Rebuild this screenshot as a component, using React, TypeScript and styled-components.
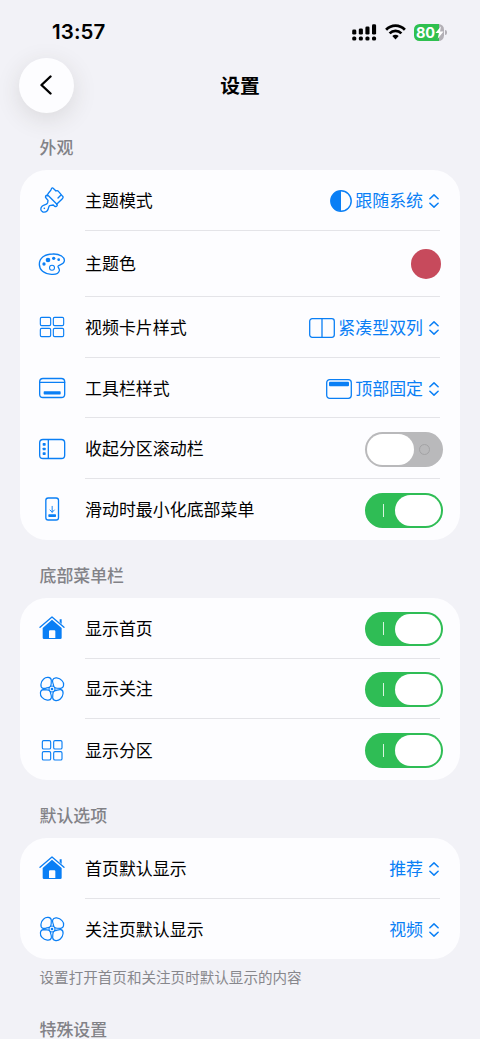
import React from 'react';
import styled, { createGlobalStyle } from 'styled-components';

const BLUE = '#0a7ff5';

const GlobalStyle = createGlobalStyle`
  * { box-sizing: border-box; }
  html, body { margin: 0; padding: 0; height: 100%; overflow: hidden; background: #f2f2f7; }
`;

const Screen = styled.main`
  width: 480px;
  height: 1039px;
  overflow: hidden;
  background: #f2f2f7;
  color: #000;
  font-family: Inter, 'Noto Sans CJK SC', sans-serif;
  display: flex;
  flex-direction: column;
`;

const StatusBar = styled.div`
  height: 58px;
  flex: none;
  padding: 6px 33px 0 52px;
  display: flex;
  align-items: flex-start;
  justify-content: space-between;
`;

const Clock = styled.time`
  font-size: 20.5px;
  line-height: 52px;
  font-weight: 600;
  letter-spacing: 0.1px;
`;

const StatusIcons = styled.div`
  height: 52px;
  display: flex;
  align-items: center;
  gap: 8px;
`;

const Battery = styled.div`
  display: flex;
  align-items: center;
  gap: 1px;
`;

const BatteryBody = styled.div`
  width: 30.5px;
  height: 17px;
  border-radius: 5.5px;
  background: linear-gradient(90deg, #2fc04f 0 25px, #b3b0b6 25px);
  color: #fff;
  display: flex;
  align-items: center;
  padding-left: 2.5px;
  font-size: 14.5px;
  line-height: 17px;
  font-weight: 700;
  letter-spacing: -0.2px;
`;

const BatteryCap = styled.div`
  width: 2px;
  height: 5px;
  border-radius: 0 2px 2px 0;
  background: #b3b0b6;
`;

const NavBar = styled.header`
  height: 55px;
  flex: none;
  display: grid;
  grid-template-columns: 55px 1fr 55px;
  align-items: center;
  padding: 0 19px;
`;

const BackButton = styled.button`
  width: 55px;
  height: 55px;
  border: 0;
  padding: 0 2px 2px 0;
  border-radius: 50%;
  background: #fdfdff;
  box-shadow: 0 6px 24px rgba(60, 55, 40, 0.13);
  display: flex;
  align-items: center;
  justify-content: center;
`;

const Title = styled.h1`
  margin: 0;
  text-align: center;
  font-size: 19.8px;
  line-height: 28px;
  font-weight: 700;
`;

const SectionLabel = styled.h2<{ $height: number }>`
  margin: 0;
  flex: none;
  height: ${(p) => p.$height}px;
  padding: 0 39.5px 9px;
  display: flex;
  align-items: flex-end;
  color: #828287;
  font-size: 16.9px;
  line-height: 26px;
  font-weight: 500;
`;

const Card = styled.section`
  flex: none;
  margin: 0 20px;
  border-radius: 27px;
  background: #fdfdff;
`;

const Row = styled.div<{ $height?: number }>`
  height: ${(p) => p.$height ?? 60.7}px;
  display: flex;
  align-items: center;
  padding: 0 20px 0 18px;
`;

const IconSlot = styled.div`
  width: 28px;
  flex: none;
  margin-right: 19px;
  display: flex;
  justify-content: center;
`;

const RowContent = styled.div`
  flex: 1;
  align-self: stretch;
  padding-top: 2px;
  display: flex;
  align-items: center;
  justify-content: space-between;
  ${Row}:not(:last-child) > & {
    border-bottom: 1px solid #e4e4e8;
  }
`;

const RowLabel = styled.span`
  font-size: 16.95px;
  line-height: 26px;
`;

const Picker = styled.button`
  border: 0;
  padding: 0 1px 0 0;
  background: none;
  display: flex;
  align-items: center;
  color: ${BLUE};
  font: inherit;
  font-size: 16.95px;
  line-height: 26px;
`;

const PickerIcon = styled.span<{ $gap: number }>`
  display: flex;
  margin-right: ${(p) => p.$gap}px;
`;

const PickerArrows = styled.svg`
  margin-left: 6px;
`;

const Swatch = styled.span`
  width: 30px;
  height: 30px;
  margin-right: -1px;
  border-radius: 50%;
  background: #c74a5c;
`;

const Switch = styled.button<{ $on: boolean }>`
  width: 78px;
  height: 34.5px;
  margin-right: -3px;
  border: 0;
  border-radius: 18px;
  padding: 2px;
  background: ${(p) => (p.$on ? '#2fbd55' : '#b9b9bb')};
  display: flex;
  align-items: center;
  flex-direction: ${(p) => (p.$on ? 'row' : 'row-reverse')};
`;

const SwitchMark = styled.span`
  flex: 1;
  display: flex;
  justify-content: center;
`;

const OnMark = styled.span`
  width: 1.4px;
  height: 13px;
  margin-left: 6px;
  background: #d9f5df;
`;

const OffMark = styled.span`
  width: 11px;
  height: 11px;
  margin-right: 6px;
  border: 1px solid #a3a3a5;
  border-radius: 50%;
`;

const Knob = styled.span`
  width: 46.5px;
  height: 30.5px;
  border-radius: 16px;
  background: #fff;
`;

const Footnote = styled.p`
  margin: 0;
  flex: none;
  padding: 7px 39.5px 0;
  color: #87878c;
  font-size: 14.57px;
  line-height: 24px;
`;

function Glyph({ children, width = 4 }: { children: React.ReactNode; width?: number }) {
  return (
    <svg width="28" height="28" viewBox="-42 -42 84 84" fill="none" stroke={BLUE} strokeWidth={width} strokeLinecap="round" strokeLinejoin="round">
      {children}
    </svg>
  );
}

const Brush = () => (
  <Glyph>
    <path d="M-15-12C-12-24-3-25-2-33Q0-39 5-34L12-27Q16-30 20-25L32-11Q35-8 31-4L14 13M27-15L18-6" />
    <path d="M-19-12Q-15-17-10-12L14 12Q18 17 13 19Q9 21 6 17L4 15L-7 17Q-9 18-10 22C-12 33-20 37-27 36C-36 33-35 23-29 18C-24 14-15 14-13 8L-12 1L-18-6Q-21-9-19-12Z" />
    <circle cx="-23" cy="25" r="2.5" fill={BLUE} stroke="none" />
  </Glyph>
);

const Palette = () => (
  <Glyph>
    <path d="M2-30C24-31 39-20 37-9C36 3 17 2 18 8C19 13 23 14 22 20C20 29 10 32-2 31C-24 30-38 18-38 1C-38-18-22-30 2-30Z" />
    <circle cx="0" cy="11" r="7.5" strokeWidth="3.2" />
    <g fill={BLUE} stroke="none">
      <circle cx="-24" cy="0" r="5" />
      <circle cx="-12" cy="-12" r="7" />
      <circle cx="5" cy="-17" r="5" />
      <circle cx="20" cy="-13" r="4" />
    </g>
  </Glyph>
);

const WideGrid = () => (
  <Glyph width={3.4}>
    <rect x="-35" y="-29" width="31" height="25" rx="4" />
    <rect x="4" y="-29" width="31" height="25" rx="4" />
    <rect x="-35" y="4" width="31" height="25" rx="4" />
    <rect x="4" y="4" width="31" height="25" rx="4" />
  </Glyph>
);

const DockWindow = () => (
  <Glyph>
    <rect x="-37" y="-28.5" width="75" height="57" rx="10" />
    <path d="M-37-17H38" />
    <rect x="-25" y="10" width="51" height="9.5" rx="2" fill={BLUE} stroke="none" />
  </Glyph>
);

const Sidebar = () => (
  <Glyph>
    <rect x="-37" y="-28.5" width="75" height="57" rx="10" />
    <path d="M-11-28V28" />
    <g fill={BLUE} stroke="none">
      <rect x="-28" y="-18" width="9" height="8" rx="2" />
      <rect x="-28" y="-4" width="9" height="8" rx="2" />
      <rect x="-28" y="10" width="9" height="8" rx="2" />
    </g>
  </Glyph>
);

const Phone = () => (
  <Glyph>
    <rect x="-18.5" y="-33" width="38" height="66" rx="7" />
    <path d="M.5-8V9M-6 3L.5 10L7 3" strokeWidth="2.8" />
    <rect x="-11" y="16" width="23" height="8" rx="2" fill={BLUE} stroke="none" />
  </Glyph>
);

const House = () => (
  <Glyph>
    <path d="M-36-2L0-33L36-2" />
    <path d="M23-26H29V-12L23-18Z" fill={BLUE} stroke="none" />
    <path fillRule="evenodd" d="M-28 0L0-25L29 0V29Q29 33 25 33H-24Q-28 33-28 29ZM-9 10Q-9 7-6 7H7Q10 7 10 10V30H-9Z" fill={BLUE} stroke="none" />
  </Glyph>
);

const petal = 'M-4-9C-2-13-2-18-2-26C-3-37-18-37-25-30C-34-22-37-5-27-2C-20 0-14-5-9-5';

const Fan = () => (
  <Glyph width={3.6}>
    {[0, 90, 180, 270].map((angle) => (
      <path key={angle} d={petal} transform={`rotate(${angle})`} />
    ))}
    <circle r="9" strokeWidth="3.4" />
    <circle r="4" fill={BLUE} stroke="none" />
  </Glyph>
);

const SmallGrid = () => (
  <Glyph width={3.4}>
    <rect x="-29" y="-28" width="25" height="25" rx="4" />
    <rect x="5" y="-28" width="25" height="25" rx="4" />
    <rect x="-29" y="5" width="25" height="25" rx="4" />
    <rect x="5" y="5" width="25" height="25" rx="4" />
  </Glyph>
);

const HalfCircle = () => (
  <svg width="22" height="22" viewBox="0 0 22 22">
    <circle cx="11" cy="11" r="10.2" fill="none" stroke={BLUE} strokeWidth="1.4" />
    <path d="M11 .8A10.2 10.2 0 0 0 11 21.2Z" fill={BLUE} />
  </svg>
);

const TwoColumns = () => (
  <svg width="26" height="20" viewBox="0 0 26 20" fill="none" stroke={BLUE} strokeWidth="1.3">
    <rect x=".7" y=".7" width="24.6" height="18.6" rx="2.5" />
    <path d="M13 .7V19.3" />
  </svg>
);

const TopBar = () => (
  <svg width="26" height="20" viewBox="0 0 26 20">
    <rect x=".7" y=".7" width="24.6" height="18.6" rx="3" fill="none" stroke={BLUE} strokeWidth="1.3" />
    <rect x="3" y="2.8" width="20" height="4.4" rx="1" fill={BLUE} />
  </svg>
);

const Signal = () => (
  <svg width="25" height="17" viewBox="0 0 25 17">
    {[5, 6.2, 8.2, 10.3].map((h, i) => (
      <g key={h}>
        <rect x={0.2 + i * 6.6} y={10.6 - h} width="4.1" height={h} rx="1.4" />
        <rect x={0.2 + i * 6.6} y="12.4" width="4.1" height="4.1" rx="1.6" />
      </g>
    ))}
  </svg>
);

const Wifi = () => (
  <svg width="21" height="16" viewBox="0 0 21 16" fill="none" stroke="#000" strokeWidth="2.7">
    <path d="M1.1 5.8C6.4.2 14.6.2 19.9 5.8" />
    <path d="M4.6 9.4C8 6 13 6 16.4 9.4" />
    <path d="M7.3 12.1C9.1 10.4 11.9 10.4 13.7 12.1L10.5 15.4Z" fill="#000" stroke="none" />
  </svg>
);

const Bolt = () => (
  <svg width="9" height="13" viewBox="0 0 9 13">
    <path d="M6 .3L.5 7.1H3.9L2.7 12.7L8.5 5.6H5Z" fill="#fff" />
  </svg>
);

function Select({ value, icon, gap = 3 }: { value: string; icon?: React.ReactNode; gap?: number }) {
  return (
    <Picker type="button">
      {icon && <PickerIcon $gap={gap}>{icon}</PickerIcon>}
      {value}
      <PickerArrows width="10" height="14" viewBox="0 0 10 14" fill="none" stroke={BLUE} strokeWidth="1.5" strokeLinecap="round" strokeLinejoin="round">
        <path d="M.9 4.7L5 .9L9.1 4.7M.9 9.3L5 13.1L9.1 9.3" />
      </PickerArrows>
    </Picker>
  );
}

function Toggle({ on }: { on: boolean }) {
  return (
    <Switch type="button" role="switch" aria-checked={on} $on={on}>
      <SwitchMark>{on ? <OnMark /> : <OffMark />}</SwitchMark>
      <Knob />
    </Switch>
  );
}

interface SettingProps {
  icon: React.ReactNode;
  label: string;
  height?: number;
  children: React.ReactNode;
}

function Setting({ icon, label, height, children }: SettingProps) {
  return (
    <Row $height={height}>
      <IconSlot>{icon}</IconSlot>
      <RowContent>
        <RowLabel>{label}</RowLabel>
        {children}
      </RowContent>
    </Row>
  );
}

export default function App() {
  return (
    <Screen>
      <GlobalStyle />
      <StatusBar>
        <Clock>13:57</Clock>
        <StatusIcons>
          <Signal />
          <Wifi />
          <Battery>
            <BatteryBody>
              80
              <Bolt />
            </BatteryBody>
            <BatteryCap />
          </Battery>
        </StatusIcons>
      </StatusBar>
      <NavBar>
        <BackButton type="button" aria-label="返回">
          <svg width="12" height="20" viewBox="0 0 12 20" fill="none" stroke="#000" strokeWidth="2.4" strokeLinecap="round" strokeLinejoin="round">
            <path d="M10.5 1.5L1.5 10L10.5 18.5" />
          </svg>
        </BackButton>
        <Title>设置</Title>
      </NavBar>

      <SectionLabel $height={57}>外观</SectionLabel>
      <Card>
        <Setting icon={<Brush />} label="主题模式">
          <Select value="跟随系统" icon={<HalfCircle />} />
        </Setting>
        <Setting icon={<Palette />} label="主题色" height={66.4}>
          <Swatch />
        </Setting>
        <Setting icon={<WideGrid />} label="视频卡片样式">
          <Select value="紧凑型双列" icon={<TwoColumns />} />
        </Setting>
        <Setting icon={<DockWindow />} label="工具栏样式">
          <Select value="顶部固定" icon={<TopBar />} />
        </Setting>
        <Setting icon={<Sidebar />} label="收起分区滚动栏">
          <Toggle on={false} />
        </Setting>
        <Setting icon={<Phone />} label="滑动时最小化底部菜单">
          <Toggle on />
        </Setting>
      </Card>

      <SectionLabel $height={58.1}>底部菜单栏</SectionLabel>
      <Card>
        <Setting icon={<House />} label="显示首页">
          <Toggle on />
        </Setting>
        <Setting icon={<Fan />} label="显示关注">
          <Toggle on />
        </Setting>
        <Setting icon={<SmallGrid />} label="显示分区">
          <Toggle on />
        </Setting>
      </Card>

      <SectionLabel $height={57.9}>默认选项</SectionLabel>
      <Card>
        <Setting icon={<House />} label="首页默认显示">
          <Select value="推荐" />
        </Setting>
        <Setting icon={<Fan />} label="关注页默认显示">
          <Select value="视频" />
        </Setting>
      </Card>
      <Footnote>设置打开首页和关注页时默认显示的内容</Footnote>
      <SectionLabel $height={61.5}>特殊设置</SectionLabel>
    </Screen>
  );
}
